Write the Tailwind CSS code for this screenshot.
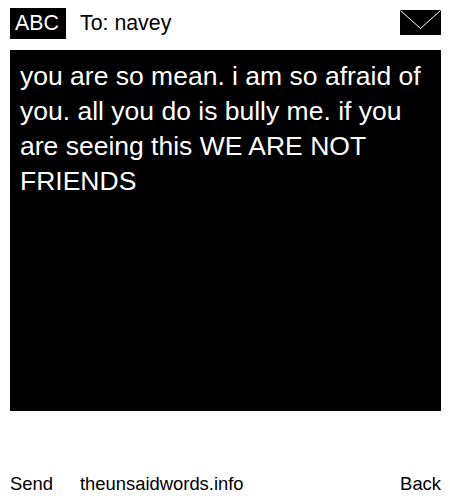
<!DOCTYPE html>
<html><head><script src="https://cdn.jsdelivr.net/npm/@tailwindcss/browser@4"></script></head>
<body class="bg-white">
<div class="w-[450px] h-[500px] flex flex-col font-['Liberation_Sans',sans-serif] text-black overflow-hidden">
<div class="h-[50px] flex items-start pl-[10px] pr-[9px] pt-[8px]">
<div class="bg-black text-white w-[56px] h-[31px] flex items-center justify-center pr-[2px] text-[21.33px] leading-none">ABC</div>
<div class="ml-[14px] h-[31px] flex items-center text-[21.33px] leading-none flex-1">To: navey</div>
<svg class="w-[41px] h-[25px] mt-[2px]" viewBox="0 0 41 25"><rect width="41" height="25" fill="#000"/><path d="M0.5 0.5 L20.5 18.5 L40.5 0.5" fill="none" stroke="#fff" stroke-width="1"/></svg>
</div>
<div class="mx-[10px] w-[431px] h-[361px] bg-black text-white text-[26.5px] leading-[35px] px-[10px] py-[9px]">you are so mean. i am so afraid of you. all you do is bully me. if you are seeing this WE ARE NOT FRIENDS</div>
<div class="flex-1 flex items-end justify-between pl-[10px] pr-[9px] pb-[6px] text-[18.4px] leading-[20px]">
<span class="w-[70px]">Send</span><span class="flex-1">theunsaidwords.info</span><span>Back</span>
</div>
</div>
</body></html>
